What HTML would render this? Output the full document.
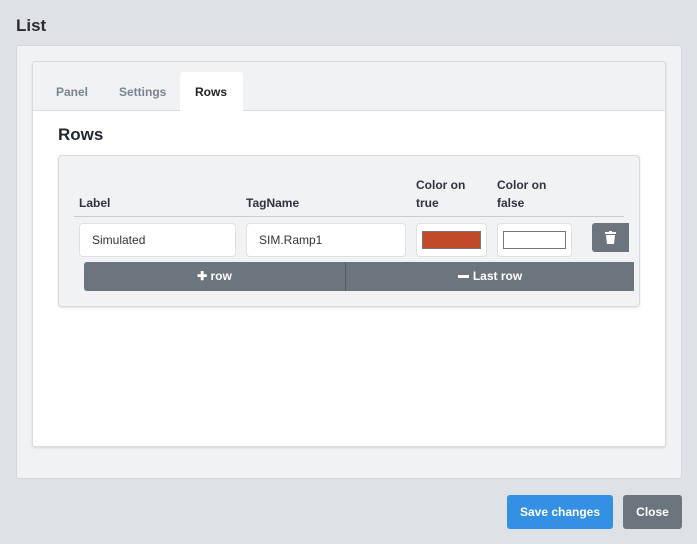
<!DOCTYPE html>
<html><head><style>
*{box-sizing:border-box;margin:0;padding:0}
body{width:697px;height:544px;background:#dee1e6;font-family:"Liberation Sans",sans-serif;position:relative;overflow:hidden;color:#212529}
.a{position:absolute}
.inp{position:absolute;background:#fff;border:1px solid #dde1e6;border-radius:4px;font-size:12px;color:#333;padding-left:12px;line-height:32px}
.th{position:absolute;font-size:12px;font-weight:bold;color:#2d3340;line-height:18px}
.btn{position:absolute;color:#fff;font-weight:bold;font-size:12px;text-align:center;border-radius:3px}
</style></head><body>
<div class="a" style="left:16px;top:16px;font-size:17px;font-weight:bold;color:#2b2d31">List</div>
<div class="a" style="left:16px;top:45px;width:666px;height:434px;background:#f1f2f4;border:1px solid #d3d6db;border-radius:3px"></div>
<div class="a" style="left:32px;top:61px;width:634px;height:386px;background:#fff;border:1px solid #d8dbe0;border-radius:3px;box-shadow:0 1px 2px rgba(0,0,0,.12);overflow:hidden">
 <div class="a" style="left:0;top:0;width:634px;height:49px;background:#f1f2f4;border-bottom:1px solid #d8dbe0"></div>
 <div class="a" style="left:147px;top:10px;width:63px;height:39px;background:#fff;border-radius:3px 3px 0 0"></div>
 <div class="a" style="left:23px;top:23px;font-size:12px;font-weight:bold;color:#7a8490">Panel</div>
 <div class="a" style="left:86px;top:23px;font-size:12px;font-weight:bold;color:#7a8490">Settings</div>
 <div class="a" style="left:162px;top:23px;font-size:12px;font-weight:bold;color:#222">Rows</div>
</div>
<div class="a" style="left:58px;top:125px;font-size:17px;font-weight:bold;color:#1f2733">Rows</div>
<div class="a" style="left:58px;top:155px;width:582px;height:152px;background:#f1f2f4;border:1px solid #d6d9de;border-radius:4px;box-shadow:0 1px 2px rgba(0,0,0,.12)"></div>
<div class="th" style="left:79px;top:194px">Label</div>
<div class="th" style="left:246px;top:194px">TagName</div>
<div class="th" style="left:416px;top:176px">Color on<br>true</div>
<div class="th" style="left:497px;top:176px">Color on<br>false</div>
<div class="a" style="left:74px;top:216px;width:550px;height:1px;background:#c8ccd2"></div>
<div class="inp" style="left:79px;top:223px;width:157px;height:34px">Simulated</div>
<div class="inp" style="left:246px;top:223px;width:160px;height:34px">SIM.Ramp1</div>
<div class="inp" style="left:416px;top:223px;width:71px;height:34px;padding:0"><div class="a" style="left:5px;top:7px;width:59px;height:18px;background:#c04a2a;border:1px solid #777"></div></div>
<div class="inp" style="left:497px;top:223px;width:75px;height:34px;padding:0"><div class="a" style="left:5px;top:7px;width:63px;height:18px;background:#fff;border:1px solid #777"></div></div>
<div class="a" style="left:592px;top:223px;width:37px;height:29px;background:#6c757d;border-radius:3px 0 0 3px">
 <svg class="a" style="left:13px;top:8px" width="11" height="13" viewBox="0 0 11 13"><rect x="0" y="1" width="11" height="2" fill="#fff"/><rect x="4" y="0" width="3" height="2" fill="#fff"/><path d="M1 4h9l-1 9H2z" fill="#fff"/></svg>
</div>
<div class="a" style="left:84px;top:262px;width:550px;height:29px;background:#6c757d;border-radius:3px 0 0 3px"></div>
<div class="a" style="left:345px;top:262px;width:1px;height:29px;background:#555c63"></div>
<div class="btn" style="left:84px;top:262px;width:261px;line-height:29px">✚ row</div>
<div class="btn" style="left:346px;top:262px;width:288px;line-height:29px"><span style="display:inline-block;width:11px;height:3px;background:#fff;vertical-align:middle;margin-right:4px"></span>Last row</div>
<div class="btn" style="left:507px;top:495px;width:106px;height:34px;line-height:34px;background:#3490e2">Save changes</div>
<div class="btn" style="left:623px;top:495px;width:59px;height:34px;line-height:34px;background:#6c757d">Close</div>
</body></html>
